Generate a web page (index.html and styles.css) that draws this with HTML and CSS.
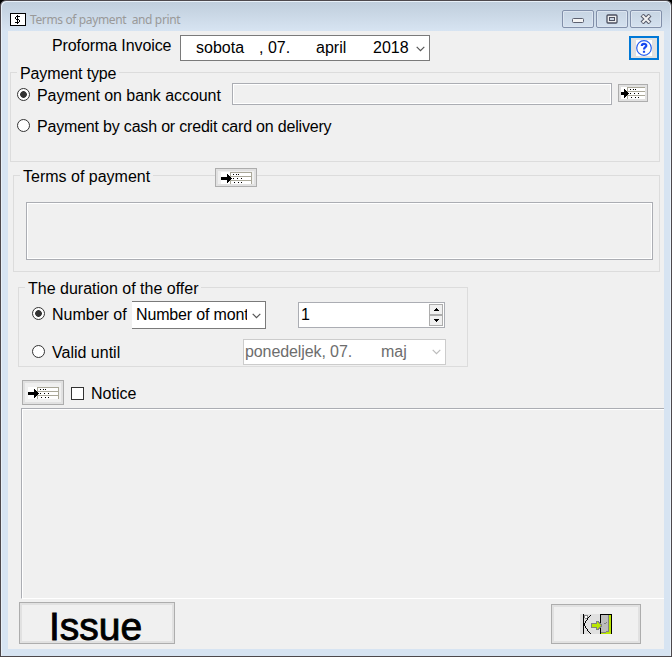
FILE: index.html
```html
<!DOCTYPE html>
<html lang="en">
<head>
<meta charset="utf-8">
<title>Terms of payment and print</title>
<link rel="stylesheet" href="styles.css">
</head>
<body>
<svg class="defs" width="0" height="0">
  <defs>
  <g id="list" shape-rendering="crispEdges">
    <path fill="#fff" d="M0 0h31v12H0z"/>
    <path fill="#aaa899" d="M9 0h22v1H9zM9 4h22v1H9zM9 8h22v1H9zM9 0h1v12H9zM30 0h1v12h-1z"/>
    <path fill="#000" d="M0 5h6V2h1v1h1v1h1v1h1v1h1v1h-1v1H9v1H8v1H7v1H6V8H0zM12 2h1v1h-1zM15 2h1v1h-1zM17 2h1v1h-1zM12 6h1v1h-1zM16 6h1v1h-1zM20 6h1v1h-1zM13 10h1v1h-1zM17 10h1v1h-1zM20 10h1v1h-1z"/>
  </g>
  <symbol id="chev" viewBox="0 0 9 6">
    <path fill="none" stroke="currentColor" stroke-width="1.2" d="M.7.8l3.8 3.8L8.3.8"/>
  </symbol>
  </defs>
</svg>
<div class="window">
  <header class="titlebar">
    <svg class="app-icon" width="16" height="13" viewBox="0 0 16 13" shape-rendering="crispEdges">
      <path d="M0 0h16v13H0z"/><path fill="#fff" d="M1 1h14v11H1z"/>
      <path d="M7 2h1v1h2v1H6v2h3v1h1v2H9v1H8v1H7v-1H5V9h4V7H6V6H5V4h1V3h1zM7 3h1v7H7z"/>
    </svg>
    <span class="title">Terms of payment&nbsp; and print</span>
    <div class="caption">
      <span class="cap"><svg class="min" width="12" height="6"><rect x=".5" y=".5" width="11" height="4" rx="1" fill="#f4f4f4" stroke="#5c6070"/></svg></span>
      <span class="cap"><svg width="12" height="10"><rect x="1" y="1" width="10" height="8" rx="1" fill="#eee" stroke="#4c5060" stroke-width="1.300"/><rect x="3.500" y="3.500" width="5" height="3" fill="#cbd6e3" stroke="#4c5060"/></svg></span>
      <span class="cap"><svg width="12" height="10"><path d="M2 1l8 8m0-8l-8 8" stroke="#565a6a" stroke-width="4.200"/><path d="M2.500 1.500l7 7m0-7l-7 7" stroke="#f2f2f2" stroke-width="2"/></svg></span>
    </div>
  </header>
  <main class="client">
    <div class="top">
      <span class="top-label">Proforma Invoice</span>
      <div class="date">
        <span class="d-day">sobota</span><span class="d-num">, 07.</span><span class="d-month">april</span><span class="d-year">2018</span>
        <svg class="arrow" width="9" height="6"><use href="#chev"/></svg>
      </div>
      <button class="help"><svg width="16" height="16" viewBox="0 0 16 16"><path fill="#fff" d="M0 0h16v16H0z"/><circle cx="8" cy="8" r="7.300" fill="#fff" stroke="#2860f0" stroke-width="1.200"/><path d="M5.800 6c0-3 4.700-2.800 4.500-.2C10.200 7.300 8 7.200 8 9.500M8 10.700v2" fill="none" stroke="#1748f0" stroke-width="2.200"/></svg></button>
    </div>

    <section class="group pay">
      <h2 class="legend">Payment type</h2>
      <div class="row">
        <i class="radio on"></i><span class="text bank">Payment on bank account</span>
        <div class="field bank-field"></div>
        <button class="btn pick"><svg width="24" height="12" viewBox="3 0 24 12"><use href="#list"/></svg></button>
      </div>
      <div class="row"><i class="radio"></i><span class="text cash">Payment by cash or credit card on delivery</span></div>
    </section>

    <section class="group terms">
      <div class="head"><h2 class="legend">Terms of payment</h2><button class="btn pick-wide"><svg width="31" height="12"><use href="#list"/></svg></button></div>
      <div class="field terms-field"></div>
    </section>

    <section class="group offer">
      <h2 class="legend">The duration of the offer</h2>
      <div class="row number">
        <i class="radio on"></i><span class="text num-label">Number of</span>
        <div class="combo"><span class="combo-text">Number of months</span><svg class="arrow" width="9" height="6"><use href="#chev"/></svg></div>
        <div class="spin"><span>1</span>
          <div class="steps">
            <b><svg width="5" height="3"><path d="M0 3h5V2H4V1H3V0H2v1H1v1H0z"/></svg></b>
            <b><svg width="5" height="3"><path d="M0 0h5v1H4v1H3v1H2V2H1V1H0z"/></svg></b>
          </div>
        </div>
      </div>
      <div class="row until">
        <i class="radio"></i><span class="text until-label">Valid until</span>
        <div class="date-off"><span class="off-day">ponedeljek, 07.</span><span>maj</span><svg class="arrow" width="9" height="6"><use href="#chev"/></svg></div>
      </div>
    </section>

    <div class="notice"><button class="btn pick-tall"><svg width="31" height="12"><use href="#list"/></svg></button><i class="check"></i><span class="text">Notice</span></div>
    <div class="memo"></div>

    <footer class="actions">
      <button class="btn issue">Issue</button>
      <button class="btn exit"><svg width="32" height="20" viewBox="0 0 32 20" shape-rendering="crispEdges">
        <path fill="#e0e0e0" d="M0 0h32v20H0z"/>
        <path fill="#000" d="M3 0h1v20H3zM10 1h1v1h-1zM9 2h1v1H9zM8 3h1v1H8zM7 4h1v2H7zM6 6h1v1H6zM5 7h1v2H5zM4 9h1v3H4zM5 12h1v2H5zM6 14h1v1H6zM7 15h1v2H7zM8 17h1v1H8zM9 18h1v1H9zM10 19h1v1h-1z"/>
        <path fill="#888" d="M4 1h4v1H4zM4 2h1v2H4zM7 2h1v2H7zM5 4h2v1H5z"/><path fill="#fff" d="M5 2h2v2H5z"/>
        <path d="M20 0h12v20H20z"/><path fill="#b9e600" d="M21 1h10v19H21z"/><path fill="#bdbdbd" d="M21 1h7v17h-2v1h-5z"/>
        <path fill="#808080" d="M28 1h1v17h-1zM21 18h5v1h-5zM26 17h2v1h-2zM24 9h2V8h1v1h-1v1h-2z"/>
        <path fill="#b9e600" stroke="#808080" d="M11.500 9.500h5v-2h2v1h1v1h1v1h1v2h-1v1h-1v1h-1v1h-2v-2h-5z"/>
      </svg></button>
    </footer>
  </main>
</div>
</body>
</html>
```
FILE: styles.css
```css
* { box-sizing: border-box; }
body { margin: 0; background: #000; font: 16px/18px "Liberation Sans", Arial, sans-serif; color: #000; }
.defs { display: block; height: 0; }
svg { display: block; flex: none; }
button { font: inherit; color: inherit; padding: 0; margin: 0; }
h2 { font: inherit; margin: 0; }
.window {
  width: 672px; height: 657px; padding: 0 7px 7px;
  border: 1px solid #4d484c; border-radius: 6px 6px 0 0;
  background: linear-gradient(#bfcddb, #d7e4f2 30px) #d7e4f2;
  box-shadow: inset 1px 1px #e8f0f8, inset -1px 0 #e8f0f8;
}
.titlebar { display: flex; height: 30px; padding: 9px 2px 0; align-items: flex-start; }
.app-icon { margin-top: 3px; }
.title { margin: 2px 0 0 4px; font: 12px/16px "Noto Sans", "Open Sans", sans-serif; letter-spacing: -.37px; color: #999; white-space: nowrap; }
.caption { display: flex; gap: 2px; margin-left: auto; }
.cap {
  display: flex; align-items: center; justify-content: center; width: 32px; height: 18px;
  border: 1px solid #8290aa; border-radius: 2px; box-shadow: inset 0 0 0 1px #dce5f0;
}
.min { margin-top: 4px; }
.client { height: 618px; background: #f0f0f0; overflow: hidden; white-space: nowrap; }
.top { display: flex; height: 41px; padding: 4px 5px 0 44px; align-items: flex-start; }
.top-label { width: 128px; margin-top: 2px; letter-spacing: -.1px; }
.date { display: flex; align-items: center; width: 250px; height: 26px; padding-left: 15px; border: 1px solid #7a7a7a; background: #fff; }
.d-day { width: 63px; }
.d-num { width: 57px; }
.d-month { width: 57px; }
.d-year { width: 43px; }
.arrow { color: #555; }
.date .arrow { margin-top: 2px; }
.help { display: flex; align-items: center; justify-content: center; width: 30px; height: 24px; margin: 1px 0 0 auto; border: 2px solid #0078d7; background: #e1e1e1; }

.group { border: 1px solid #dcdcdc; }
.legend { width: max-content; height: 18px; padding: 0 3px; background: #f0f0f0; }
.row { display: flex; align-items: flex-start; }
.radio { flex: none; width: 13px; height: 13px; border: 1px solid #333; border-radius: 50%; background: #fff; }
.radio.on { background: radial-gradient(circle at center, #333 0 3px, #fff 3.700px); }
.field { border: 1px solid #abadb3; box-shadow: inset 0 0 0 1px #fff; }
.btn { display: flex; align-items: center; justify-content: center; border: 1px solid #adadad; background: #f0f0f0; box-shadow: inset 0 0 0 2px #e1e1e1; }

.pay { width: 650px; height: 90px; margin-left: 2px; }
.pay .legend { margin: -8px 0 0 6px; letter-spacing: -.12px; }
.pay .row { height: 31px; padding-left: 6px; }
.pay .radio { margin-top: 5px; }
.pay .text { margin: 4px 0 0 7px; }
.pay .bank { width: 195px; letter-spacing: -.05px; }
.pay .cash { letter-spacing: -.19px; }
.bank-field { width: 380px; height: 22px; }
.pick { width: 30px; height: 18px; margin: 1px 0 0 6px; }

.terms { width: 647px; height: 97px; margin: 13px 0 0 5px; }
.head { display: flex; height: 26px; margin-top: -8px; padding-left: 6px; }
.pick-wide { width: 42px; height: 19px; margin-left: 62px; }
.terms .legend { width: 133px; }
.terms-field { width: 627px; height: 58px; margin: 8px 0 0 12px; }

.offer { width: 450px; height: 80px; margin: 15px 0 0 10px; }
.offer .legend { margin: -8px 0 0 6px; }
.offer .row { padding-left: 13px; }
.number { height: 38px; margin-top: 3px; }
.number .radio { margin-top: 6px; }
.num-label { width: 80px; margin: 5px 0 0 7px; }
.combo { display: flex; align-items: center; width: 134px; height: 28px; border: 1px solid #7a7a7a; border-left: 0; background: #fff; }
.combo-text { width: 115px; height: 18px; margin-top: -1px; padding-left: 4px; overflow: hidden; letter-spacing: -.16px; }
.combo .arrow { margin: 2px 0 0 5px; }
.spin { display: flex; justify-content: space-between; width: 147px; height: 26px; margin: 1px 0 0 32px; padding: 1px; border: 1px solid #abadb3; background: #fff; }
.spin span { margin: 2px 0 0 1px; }
.steps b { display: flex; align-items: center; justify-content: center; width: 14px; height: 11px; border: 1px solid #adadad; background: #f0f0f0; }
.until .radio { margin-top: 6px; }
.until-label { width: 191px; margin: 5px 0 0 7px; }
.date-off { display: flex; align-items: center; width: 203px; height: 26px; padding-left: 1px; border: 1px solid #ccc; background: #fff; color: #6d6d6d; }
.off-day { width: 136px; letter-spacing: -.1px; }
.date-off .arrow { margin-left: auto; margin-right: 4px; color: #bbb; }

.notice { display: flex; height: 28px; margin-top: 13px; padding-left: 14px; align-items: flex-start; }
.pick-tall { width: 42px; height: 25px; }
.check { width: 13px; height: 13px; margin: 7px 7px 0; border: 1px solid #333; background: #fff; }
.notice .text { margin-top: 5px; }
.memo { height: 191px; margin: 0 0 1px 13px; border: 1px solid #abadb3; border-right: 0; border-bottom-color: #fff; box-shadow: inset 1px 1px #fff; }

.actions { display: flex; justify-content: space-between; align-items: flex-start; padding: 2px 23px 0 11px; }
.issue { width: 156px; height: 42px; font-size: 39px; line-height: 40px; padding: 8px 3px 0 0; -webkit-text-stroke: .9px #000; }
.exit { width: 90px; height: 40px; margin-top: 2px; }
```
